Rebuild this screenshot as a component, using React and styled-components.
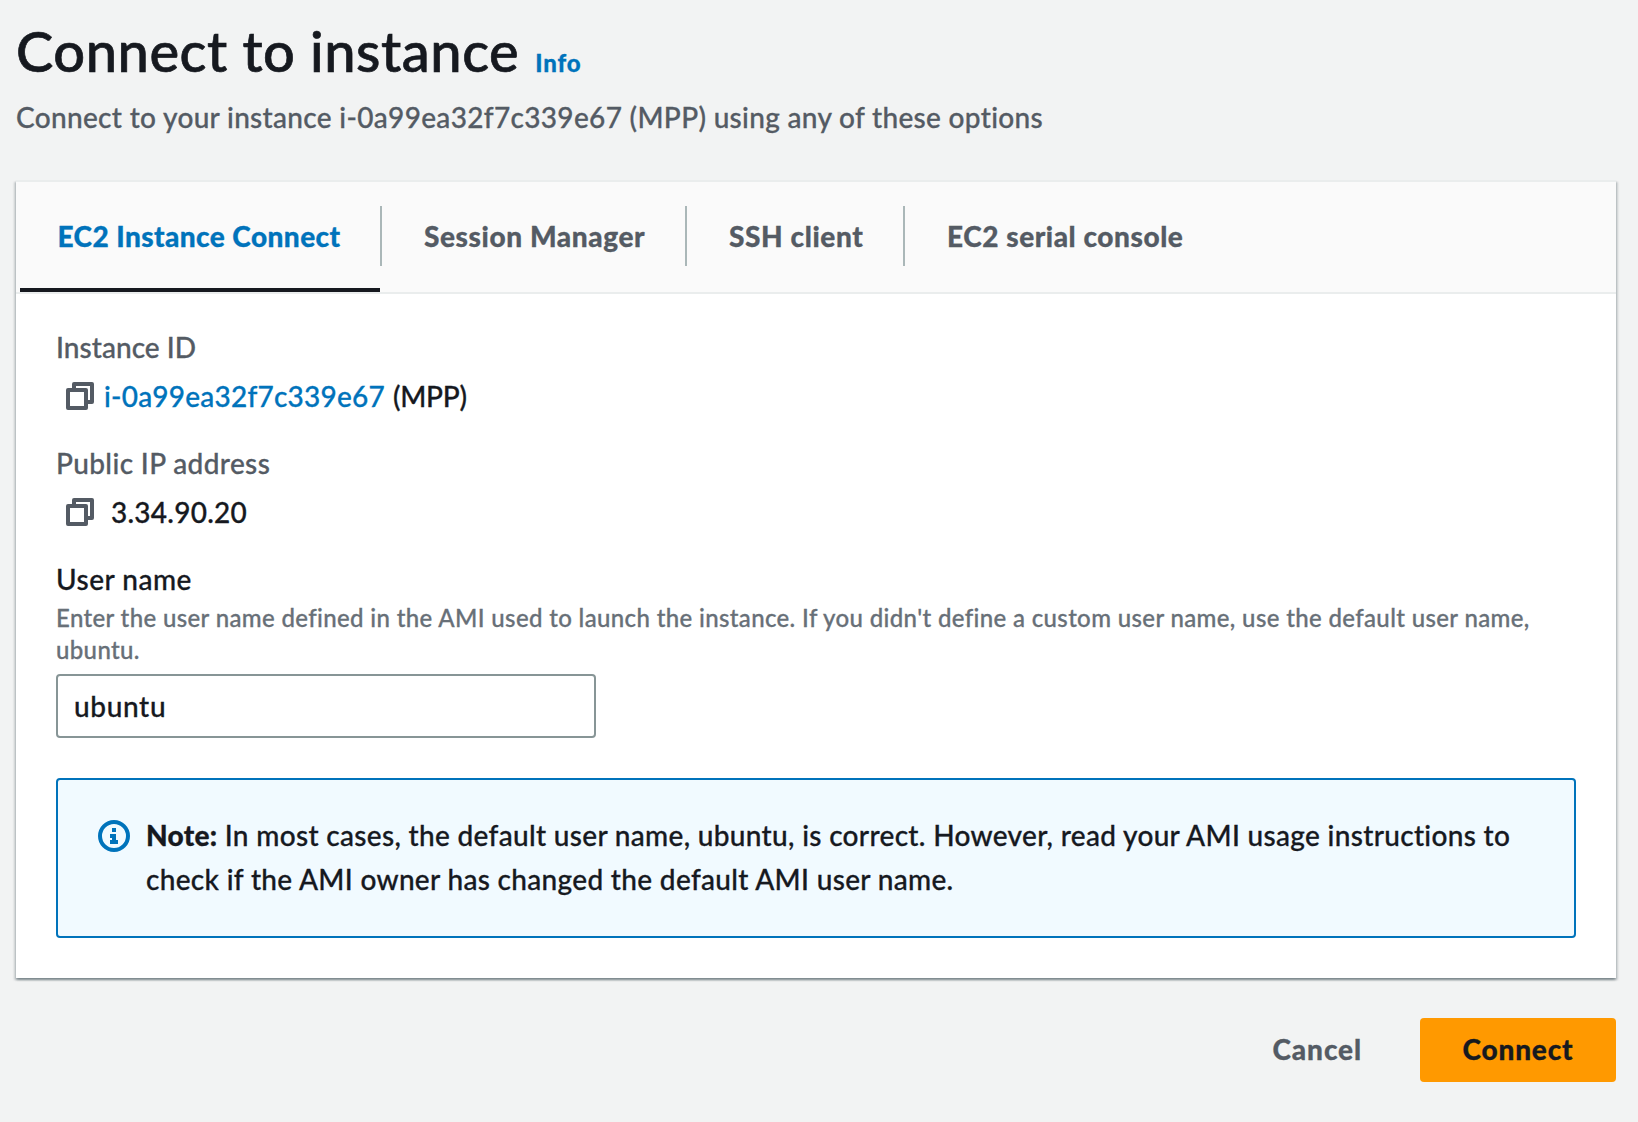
import React, { useState } from "react";
import styled, { createGlobalStyle, css } from "styled-components";

const color = {
  page: "#f2f3f3",
  panel: "#ffffff",
  header: "#fafafa",
  line: "#eaeded",
  divider: "#aab7b8",
  field: "#879596",
  text: "#16191f",
  label: "#545b64",
  hint: "#687078",
  link: "#0073bb",
  noteBg: "#f1faff",
  primary: "#ff9900",
};

const GlobalStyle = createGlobalStyle`
  *, *::before, *::after { box-sizing: border-box; }
  body {
    margin: 0;
    background: ${color.page};
    color: ${color.text};
    font: 500 28px/44px Lato, "Noto Sans", sans-serif;
    letter-spacing: 0.3px;
    -webkit-text-stroke: 0.3px currentColor;
  }
`;

const Page = styled.main`
  min-height: 1122px;
  padding: 17px 22px 40px 16px;
`;

const PageHeader = styled.header`
  display: flex;
  flex-direction: column;
  gap: 10px;
`;

const TitleRow = styled.div`
  display: flex;
  align-items: baseline;
  gap: 16px;
  height: 68px;
`;

const Title = styled.h1`
  margin: 0;
  font-size: 56px;
  font-weight: 500;
  line-height: 68px;
  letter-spacing: 0.53px;
  -webkit-text-stroke: 0.7px currentColor;
`;

const InfoLink = styled.a`
  color: ${color.link};
  font-size: 24px;
  font-weight: 900;
  line-height: 32px;
  letter-spacing: 0.9px;
  text-decoration: none;
`;

const Subtitle = styled.p`
  margin: 0;
  color: ${color.label};
  letter-spacing: 0.32px;
`;

const Panel = styled.section`
  width: 1600px;
  margin-top: 41px;
  background: ${color.panel};
  border-top: 2px solid ${color.line};
  box-shadow:
    0 2px 2px 0 rgba(0, 28, 36, 0.3),
    2px 2px 2px 0 rgba(0, 28, 36, 0.15),
    -2px 2px 2px 0 rgba(0, 28, 36, 0.15);
`;

const TabList = styled.div`
  display: flex;
  height: 112px;
  padding-left: 4px;
  background: ${color.header};
  border-bottom: 2px solid ${color.line};
`;

const Tab = styled.button`
  width: ${(p) => p.$width}px;
  height: 110px;
  padding: 0 0 2px ${(p) => p.$inset}px;
  border: 0;
  border-top: 4px solid transparent;
  border-bottom: 4px solid ${(p) => (p.$active ? color.text : "transparent")};
  background: none;
  color: ${(p) => (p.$active ? color.link : color.label)};
  font: inherit;
  font-weight: 900;
  letter-spacing: ${(p) => p.$tracking}px;
  text-align: left;
  white-space: nowrap;
`;

const TabDivider = styled.span`
  width: 2px;
  height: 60px;
  margin-top: 24px;
  background: ${color.divider};
`;

const PanelBody = styled.div`
  display: flex;
  flex-direction: column;
  gap: 24px;
  padding: 31px 40px 40px;
`;

const Field = styled.div`
  display: flex;
  flex-direction: column;
  gap: 4px;
`;

const Label = styled.div`
  color: ${color.label};
  letter-spacing: ${(p) => p.$tracking}px;
`;

const Value = styled.div`
  display: flex;
  align-items: center;
  gap: 8px;
  height: 44px;
  padding: 2px 0 0 8px;
`;

const CopyButton = styled.button`
  display: flex;
  width: 32px;
  height: 32px;
  margin-right: ${(p) => p.$space || 0}px;
  padding: 0;
  border: 0;
  background: none;
  color: ${color.label};
`;

const ValueLink = styled.a`
  color: ${color.link};
  letter-spacing: 0.22px;
  text-decoration: none;
`;

const ValueText = styled.span`
  letter-spacing: ${(p) => p.$tracking}px;
`;

const UserForm = styled.div`
  display: flex;
  flex-direction: column;
`;

const FieldLabel = styled.label`
  letter-spacing: 0.5px;
`;

const Hint = styled.p`
  margin: 1px 0 8px;
  color: ${color.hint};
  font-size: 24px;
  line-height: 32px;
  letter-spacing: 0.358px;
`;

const Input = styled.input`
  width: 540px;
  height: 64px;
  padding: 0 16px;
  border: 2px solid ${color.field};
  border-radius: 4px;
  background: ${color.panel};
  color: ${color.text};
  font: inherit;
  letter-spacing: 0.65px;
  outline: 0;
`;

const Note = styled.div`
  display: flex;
  gap: 16px;
  height: 160px;
  margin-top: 16px;
  padding: 33px 40px;
  border: 2px solid ${color.link};
  border-radius: 4px;
  background: ${color.noteBg};
`;

const NoteIcon = styled.span`
  display: flex;
  flex: none;
  width: 32px;
  height: 32px;
  margin-top: 7px;
  color: ${color.link};
`;

const NoteText = styled.p`
  margin: 0;
  letter-spacing: 0.32px;
  white-space: nowrap;
`;

const Strong = styled.b`
  font-weight: 900;
  letter-spacing: 0.3px;
`;

const Actions = styled.div`
  display: flex;
  justify-content: flex-end;
  width: 1600px;
  margin-top: 40px;
`;

const Button = styled.button`
  height: 64px;
  padding: 0 42px 2px;
  border: 0;
  border-radius: 4px;
  background: none;
  color: ${color.label};
  font: inherit;
  font-weight: 900;
  letter-spacing: 0.9px;
  ${(p) =>
    p.$primary &&
    css`
      width: 196px;
      margin-left: 16px;
      background: ${color.primary};
      color: ${color.text};
      letter-spacing: 0.8px;
    `}
`;

const Icon = styled.svg`
  width: 32px;
  height: 32px;
  fill: none;
  stroke: currentColor;
  stroke-width: 2;
  stroke-linejoin: round;
`;

function CopyIcon() {
  return (
    <Icon viewBox="0 0 16 16" aria-hidden="true">
      <path d="M2 5h9v9H2z" />
      <path d="M5 5V2h9v9h-3" />
    </Icon>
  );
}

function InfoIcon() {
  return (
    <Icon viewBox="0 0 16 16" aria-hidden="true">
      <circle cx="8" cy="8" r="7" />
      <path
        d="M7 4h2v2H7zM6 7h3v3h1v2H6v-2h1V9H6z"
        fill="currentColor"
        stroke="none"
      />
    </Icon>
  );
}

const tabs = [
  { name: "EC2 Instance Connect", width: 360, inset: 37.5, tracking: 0.43 },
  { name: "Session Manager", width: 303, inset: 42, tracking: 0.6 },
  { name: "SSH client", width: 216, inset: 42, tracking: 0.6 },
  { name: "EC2 serial console", width: 320, inset: 42, tracking: 0.56 },
];

export default function App() {
  const [user, setUser] = useState("ubuntu");
  const [active, setActive] = useState(0);
  return (
    <Page>
      <GlobalStyle />
      <PageHeader>
        <TitleRow>
          <Title>Connect to instance</Title>
          <InfoLink>Info</InfoLink>
        </TitleRow>
        <Subtitle>
          Connect to your instance i-0a99ea32f7c339e67 (MPP) using any of these
          options
        </Subtitle>
      </PageHeader>
      <Panel>
        <TabList>
          {tabs.map((tab, i) => (
            <React.Fragment key={tab.name}>
              {i > 0 && <TabDivider />}
              <Tab
                $width={tab.width}
                $inset={tab.inset}
                $tracking={tab.tracking}
                $active={i === active}
                onClick={() => setActive(i)}
              >
                {tab.name}
              </Tab>
            </React.Fragment>
          ))}
        </TabList>
        <PanelBody>
          <Field>
            <Label $tracking={0.05}>Instance ID</Label>
            <Value>
              <CopyButton>
                <CopyIcon />
              </CopyButton>
              <ValueLink>i-0a99ea32f7c339e67</ValueLink>
              <ValueText $tracking={-0.25}>(MPP)</ValueText>
            </Value>
          </Field>
          <Field>
            <Label $tracking={0.38}>Public IP address</Label>
            <Value>
              <CopyButton $space={7}>
                <CopyIcon />
              </CopyButton>
              <ValueText $tracking={0.25}>3.34.90.20</ValueText>
            </Value>
          </Field>
          <UserForm>
            <FieldLabel htmlFor="user">User name</FieldLabel>
            <Hint>
              Enter the user name defined in the AMI used to launch the
              instance. If you didn't define a custom user name, use the default
              user name, ubuntu.
            </Hint>
            <Input
              id="user"
              value={user}
              onChange={(e) => setUser(e.target.value)}
            />
          </UserForm>
          <Note>
            <NoteIcon>
              <InfoIcon />
            </NoteIcon>
            <NoteText>
              <Strong>Note:</Strong> In most cases, the default user name,
              ubuntu, is correct. However, read your AMI usage instructions to
              <br />
              check if the AMI owner has changed the default AMI user name.
            </NoteText>
          </Note>
        </PanelBody>
      </Panel>
      <Actions>
        <Button>Cancel</Button>
        <Button $primary>Connect</Button>
      </Actions>
    </Page>
  );
}
